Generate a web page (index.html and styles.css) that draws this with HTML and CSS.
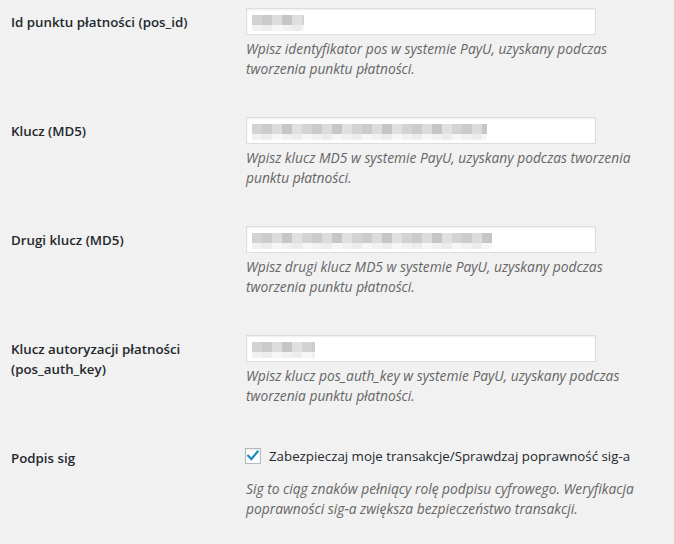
FILE: index.html
```html
<!DOCTYPE html>
<html lang="pl">

<head>
    <meta charset="UTF-8">
    <meta name="viewport" content="width=device-width, initial-scale=1.0">
    <title>PayU - ustawienia</title>
    <link rel="stylesheet" href="styles.css">
</head>

<body>
    <div class="form-table">
        <!-- pos_id -->
        <div class="row">
            <div class="th">Id punktu płatności (pos_id)</div>
            <div class="td">
                <div class="input"><span class="mask" style="width: 52px"></span></div>
                <p class="description">Wpisz identyfikator pos w systemie PayU, uzyskany podczas tworzenia punktu płatności.</p>
            </div>
        </div>

        <!-- MD5 -->
        <div class="row">
            <div class="th">Klucz (MD5)</div>
            <div class="td">
                <div class="input"><span class="mask" style="width: 235px"></span></div>
                <p class="description">Wpisz klucz MD5 w systemie PayU, uzyskany podczas tworzenia punktu płatności.</p>
            </div>
        </div>

        <!-- second MD5 -->
        <div class="row">
            <div class="th">Drugi klucz (MD5)</div>
            <div class="td">
                <div class="input"><span class="mask" style="width: 240px"></span></div>
                <p class="description">Wpisz drugi klucz MD5 w systemie PayU, uzyskany podczas tworzenia punktu płatności.</p>
            </div>
        </div>

        <!-- pos_auth_key -->
        <div class="row">
            <div class="th">Klucz autoryzacji płatności (pos_auth_key)</div>
            <div class="td">
                <div class="input"><span class="mask" style="width: 63px"></span></div>
                <p class="description">Wpisz klucz pos_auth_key w systemie PayU, uzyskany podczas tworzenia punktu płatności.</p>
            </div>
        </div>

        <!-- sig -->
        <div class="row">
            <div class="th">Podpis sig</div>
            <div class="td">
                <label class="check">
                    <span class="checkbox">
                        <svg width="16" height="16" viewBox="0 0 16 16">
                            <path d="M3.2 7.8 L6.4 11 L12.6 3.6" fill="none" stroke="#1e8cbe" stroke-width="2.2" stroke-linecap="square"/>
                        </svg>
                    </span>
                    Zabezpieczaj moje transakcje/Sprawdzaj poprawność sig-a
                </label>
                <p class="description sig">Sig to ciąg znaków pełniący rolę podpisu cyfrowego. Weryfikacja poprawności sig-a zwiększa bezpieczeństwo transakcji.</p>
            </div>
        </div>
    </div>
</body>

</html>
```

FILE: styles.css
```css
/* Reset CSS */
* {
    box-sizing: border-box;
    margin: 0;
    padding: 0;
}

body {
    font-family: "Open Sans", "Noto Sans", sans-serif;
    font-size: 13.3px;
    background-color: #f1f1f1;
    color: #23282d;
    overflow: hidden;
}

.form-table {
    margin-top: -8px;
    padding-left: 11px;
}

.row {
    display: flex;
    height: 109px;
}

.th {
    width: 225px;
    padding: 20px 10px 20px 0;
    font-weight: 600;
    line-height: 20px;
}

.td {
    flex: 1;
    padding: 15px 10px;
}

.input {
    width: 350px;
    height: 27px;
    margin: 1px 0;
    padding: 6px 5px 4px;
    background-color: #fff;
    border: 1px solid #ddd;
    box-shadow: inset 0 1px 2px rgba(0, 0, 0, 0.07);
}

.mask {
    display: block;
    height: 16px;
    background:
        repeating-linear-gradient(90deg, #d3d3d3 0 10px, #cbcbcb 10px 20px, #dcdcdc 20px 30px, #c6c6c6 30px 40px, #e0e0e0 40px 50px) top / 100% 10px no-repeat,
        repeating-linear-gradient(90deg, #f1f1f1 0 10px, #ececec 10px 20px, #f6f6f6 20px 30px) bottom / 100% 6px no-repeat;
}

.description {
    width: 400px;
    margin: 4px 0 0;
    font-size: 13.8px;
    font-style: italic;
    line-height: 19.5px;
    color: #666;
}

.check {
    display: flex;
    align-items: center;
    height: 26px;
    margin-left: -1px;
}

.checkbox {
    width: 16px;
    height: 16px;
    margin-right: 8px;
    background-color: #fff;
    border: 1px solid #b4b9be;
    box-shadow: inset 0 1px 2px rgba(0, 0, 0, 0.1);
    position: relative;
}

.checkbox svg {
    position: absolute;
    left: -1px;
    top: -1px;
}

.description.sig {
    margin-top: 10px;
}
```
